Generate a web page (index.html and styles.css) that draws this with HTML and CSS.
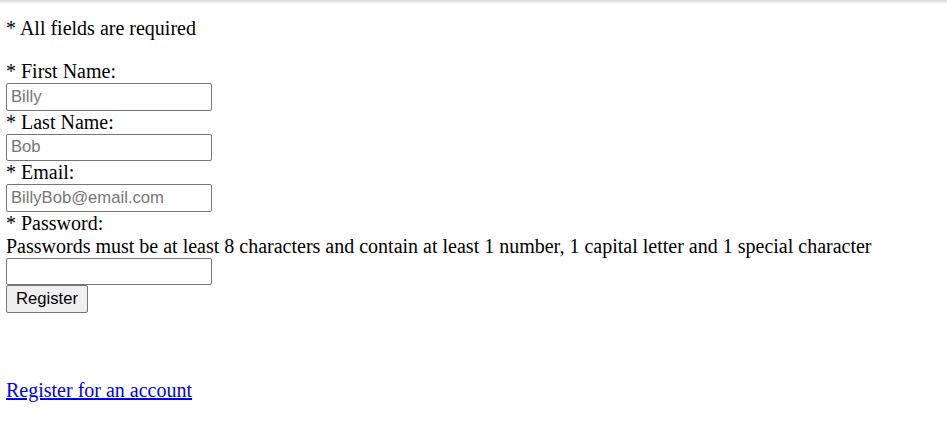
FILE: index.html
```html
<!DOCTYPE html>
<html>
<head>
<meta charset="utf-8">
<link rel="stylesheet" href="styles.css">
</head>
<body>
<div class="topshade"></div>
<main class="content">
  <p class="note">* All fields are required</p>
  <form class="form">
    <label class="label">* First Name:</label><br>
    <input class="field" type="text" placeholder="Billy"><br>
    <label class="label">* Last Name:</label><br>
    <input class="field" type="text" placeholder="Bob"><br>
    <label class="label">* Email:</label><br>
    <input class="field" type="text" placeholder="BillyBob@email.com"><br>
    <label class="label">* Password:</label><br>
    <span class="hint">Passwords must be at least 8 characters and contain at least 1 number, 1 capital letter and 1 special character</span><br>
    <input class="field" type="password"><br>
    <button class="btn" type="button">Register</button>
  </form>
  <p class="linkrow"><a class="link" href="#">Register for an account</a></p>
</main>
</body>
</html>
```
FILE: styles.css
```css
html, body {
  margin: 0;
  padding: 0;
  background: #fff;
}
body {
  font-family: "Liberation Serif", "Times New Roman", serif;
  font-size: 20px;
  color: #000;
}
.topshade {
  height: 4px;
  background: linear-gradient(to bottom, #d6d6d6, #ececec 50%, #fff);
}
.content {
  padding: 0 6px;
}
.note {
  margin: 13px 0 20px;
}
.form {
  margin: 0;
}
.field {
  box-sizing: border-box;
  width: 206px;
  height: 27.5px;
  margin: 0;
  padding: 1px 4px;
  border: 1px solid #767676;
  border-radius: 2px;
  font-family: "Liberation Sans", Arial, sans-serif;
  font-size: 16.67px;
  color: #000;
  vertical-align: bottom;
}
.field::placeholder {
  color: #757575;
}
.btn {
  box-sizing: border-box;
  width: 82px;
  height: 28px;
  margin: 0;
  padding: 1px 8px;
  border: 1px solid #767676;
  border-radius: 2px;
  background: #efefef;
  font-family: "Liberation Sans", Arial, sans-serif;
  font-size: 16.67px;
  color: #000;
  vertical-align: bottom;
}
.linkrow {
  margin: 66px 0 0;
}
.link {
  color: #0000ee;
}
```
